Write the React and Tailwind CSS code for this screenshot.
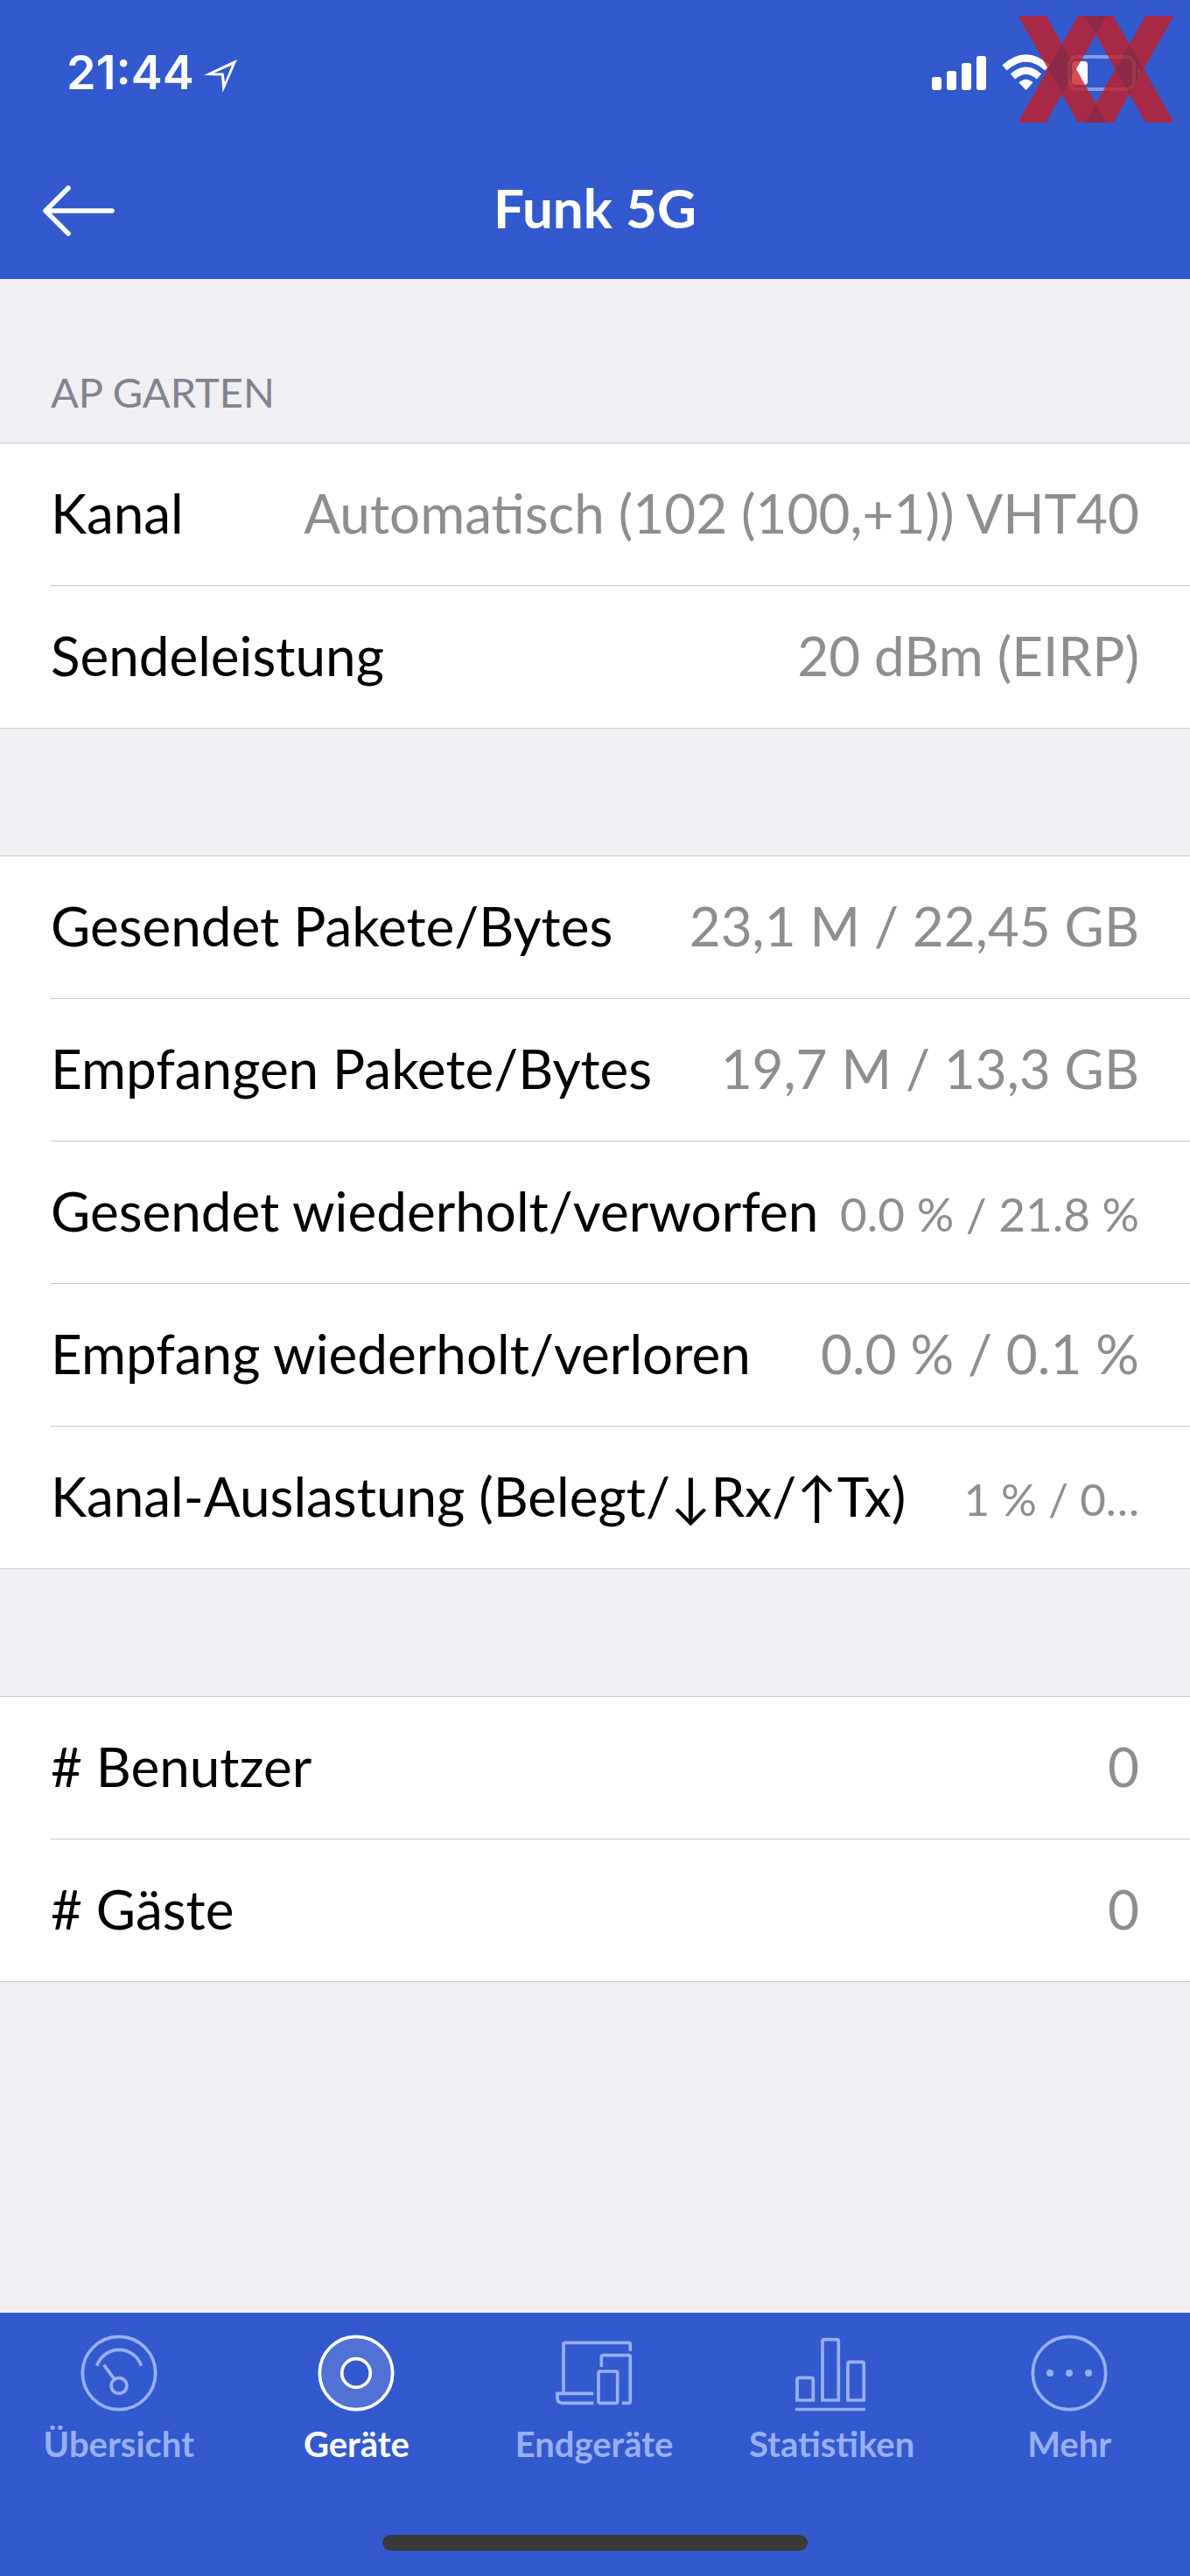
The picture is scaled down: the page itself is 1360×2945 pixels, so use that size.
import React from 'react';

const GROUPS = [
    {
        title: 'AP GARTEN',
        rows: [
            { label: 'Kanal', value: 'Automatisch (102 (100,+1)) VHT40' },
            { label: 'Sendeleistung', value: '20 dBm (EIRP)' },
        ],
    },
    {
        rows: [
            { label: 'Gesendet Pakete/Bytes', value: '23,1 M / 22,45 GB' },
            { label: 'Empfangen Pakete/Bytes', value: '19,7 M / 13,3 GB' },
            { label: 'Gesendet wiederholt/verworfen', value: '0.0 % / 21.8 %', size: 'text-[53px] pt-2' },
            { label: 'Empfang wiederholt/verloren', value: '0.0 % / 0.1 %' },
            { label: 'Kanal-Auslastung (Belegt/↓Rx/↑Tx)', value: '1 % / 0…', size: 'text-[51px] pt-2' },
        ],
    },
    {
        rows: [
            { label: '# Benutzer', value: '0' },
            { label: '# Gäste', value: '0' },
        ],
    },
];

const GaugeIcon = () => (
    <>
        <circle cx="44" cy="44" r="41.7" />
        <path d="M18.7 35.7A26.8 26.8 0 0 1 69.5 35.7M26.7 34.7L38 50" />
        <circle cx="44" cy="58.5" r="8.9" />
    </>
);

const DeviceIcon = () => (
    <path d="M44 2.3a41.7 41.7 0 1 0 0 83.4a41.7 41.7 0 1 0 0-83.4zM44 27.7a16.3 16.3 0 1 1 0 32.6a16.3 16.3 0 1 1 0-32.6z" fill="#fff" fillOpacity="0.15" fillRule="evenodd" />
);

const ClientsIcon = () => (
    <>
        <path d="M9 67V11.3q0-2 2-2H83.3q2 0 2 2V18.7" />
        <path d="M43.3 67.3H2V72.3q0 6 6 6H43.3" />
        <path d="M52.3 37V25.7q0-2 2-2H83.3q2 0 2 2V76.3q0 2-2 2H76" />
        <rect x="49" y="42" width="21.7" height="36.3" rx="2" />
    </>
);

const StatsIcon = () => (
    <>
        <path d="M4 75V51.3q0-2 2-2H20.3q2 0 2 2V75z" />
        <path d="M33 75V7.7q0-2 2-2H49.3q2 0 2 2V75z" />
        <path d="M62 75V33.3q0-2 2-2H78.3q2 0 2 2V75z" />
        <path d="M2 85.5H82" />
    </>
);

const MoreIcon = () => (
    <>
        <circle cx="44" cy="44" r="41.7" />
        <g fill="currentColor" stroke="none">
            <circle cx="22" cy="44" r="4" />
            <circle cx="44" cy="44" r="4" />
            <circle cx="66" cy="44" r="4" />
        </g>
    </>
);

const TABS = [
    { label: 'Übersicht', Icon: GaugeIcon },
    { label: 'Geräte', Icon: DeviceIcon, active: true },
    { label: 'Endgeräte', Icon: ClientsIcon },
    { label: 'Statistiken', Icon: StatsIcon },
    { label: 'Mehr', Icon: MoreIcon },
];

// Red double X, sits on top of the status icons
const Watermark = () => (
    <svg className="absolute top-[18px] right-[18px] w-[179px] h-[122px]" viewBox="0 0 537 367" aria-hidden="true">
        <g opacity="0.78">
            <path fill="#c91c21" d="M0 0H97L152 97.500L207 0H327L384 97.500L439 0H537L433 183.500L537 367H439L384 269.500L329 367H207L152 269.500L97 367H0L104 183.500zM268 64L201 183.500L268 303L335 183.500z" fillRule="evenodd" />
            <path fill="#a51c21" d="M152 97.500L200 183.500L152 269.500L104 183.500zM384 97.500L432 183.500L384 269.500L336 183.500zM232 0H304L268 64zM232 367H304L268 303z" />
        </g>
    </svg>
);

const StatusBar = () => (
    <div className="h-[166px] pl-[76px] pr-[51px] flex items-center justify-between relative">
        <div className="flex items-center gap-[11px]">
            <span className="font-[Inter,sans-serif] font-semibold text-[54px] leading-[64px]">21:44</span>
            <svg className="w-[38px] h-[38px] mt-2" viewBox="0 0 38 38" fill="currentColor" aria-hidden="true">
                <path d="M38 0L0 18L20 18.500L21.500 38zM32 6.500L11.500 15.500L22.500 15.500L24 26z" fillRule="evenodd" />
            </svg>
        </div>
        <svg className="w-[244px] h-[42px]" viewBox="1065 62 244 42" fill="currentColor" aria-hidden="true">
            {/* signal */}
            <rect x="1065" y="88" width="11" height="15" rx="3" />
            <rect x="1082" y="81" width="11" height="22" rx="3" />
            <rect x="1099" y="72" width="11" height="31" rx="3" />
            <rect x="1116" y="64" width="11" height="39" rx="3" />
            {/* wifi */}
            <path d="M1172.500 103L1164.500 94.500Q1172.500 87 1180.500 94.500z" />
            <path d="M1157.500 87.500Q1172.500 74 1187.500 87.500" fill="none" stroke="currentColor" strokeWidth="8" />
            <path d="M1148 77.500Q1172.500 55.500 1197 77.500" fill="none" stroke="currentColor" strokeWidth="8" />
            {/* battery */}
            <rect x="1222" y="65" width="74" height="37" rx="9" fill="none" stroke="currentColor" strokeWidth="4" opacity="0.4" />
            <path d="M1301 77q7 6.500 0 13z" opacity="0.4" />
            <rect x="1225" y="70" width="18" height="27" rx="4" />
        </svg>
        <Watermark />
    </div>
);

const Row = ({ label, value, size = 'text-[62px]' }) => (
    <div className="h-[163px] ml-[58px] pr-[58px] pb-1 flex items-center justify-between gap-6 border-b border-[#c8c7cc] last:ml-0 last:pl-[58px]">
        <dt className="text-[62px] leading-[74px] whitespace-nowrap text-black">{label}</dt>
        <dd className={`truncate text-right text-[#8e8e8e] leading-[74px] ${size}`}>{value}</dd>
    </div>
);

const App = () => {
    return (
        <div className="min-h-screen flex flex-col bg-[#efeff4] font-[Lato,sans-serif]">
            <header className="bg-[#325ace] text-white h-[319px]">
                <StatusBar />
                <div className="grid grid-cols-[1fr_auto_1fr] items-center px-12 h-[150px]">
                    <button type="button" aria-label="Zurück" className="w-[84px]">
                        <svg className="w-[84px] h-[60px]" viewBox="0 0 84 60" fill="none" stroke="currentColor" strokeWidth="5.500" strokeLinecap="round" strokeLinejoin="round" aria-hidden="true">
                            <path d="M80 30H4M30 4L4 30L30 56" />
                        </svg>
                    </button>
                    <h1 className="font-bold text-[62px] leading-[74px] pb-2">Funk 5G</h1>
                </div>
            </header>

            <main className="flex-1">
                {GROUPS.map((group, idx) => (
                    <section key={idx}>
                        {group.title ? (
                            <h2 className="h-[187px] pl-[58px] pb-7 flex items-end text-[47px] leading-[60px] text-[#83828e]">{group.title}</h2>
                        ) : (
                            <div className="h-[145px]"></div>
                        )}
                        <dl className="bg-white border-t border-[#c8c7cc]">
                            {group.rows.map((row) => (
                                <Row key={row.label} {...row} />
                            ))}
                        </dl>
                    </section>
                ))}
            </main>

            <footer className="bg-[#325ace] h-[301px] pt-[25px] pb-[29px] flex flex-col items-center justify-between">
                <nav className="w-full grid grid-cols-5 pr-0.5">
                    {TABS.map(({ label, Icon, active }) => (
                        <a key={label} href="#" aria-current={active ? 'page' : undefined}
                            className={`flex flex-col items-center gap-[13px] ${active ? 'text-white' : 'text-[#98aff4]'}`}>
                            <svg className="w-[88px] h-[88px]" viewBox="0 0 88 88" fill="none" stroke="currentColor" strokeWidth="3.700" aria-hidden="true">
                                <Icon />
                            </svg>
                            <span className="font-bold text-[40px] leading-[48px]">{label}</span>
                        </a>
                    ))}
                </nav>
                <div className="w-[486px] h-[18px] rounded-full bg-[#3a3a3a]"></div>
            </footer>
        </div>
    );
};

export default App;
